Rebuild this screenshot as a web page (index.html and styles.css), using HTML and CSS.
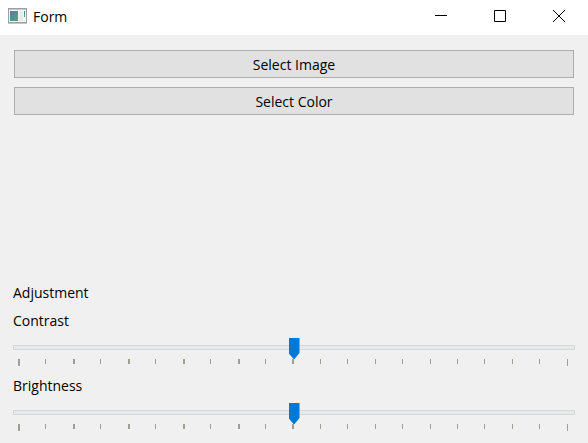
FILE: index.html
```html
<!DOCTYPE html>
<html lang="en">
<head>
<meta charset="utf-8">
<meta name="viewport" content="width=device-width, initial-scale=1">
<title>Form</title>
<link rel="stylesheet" href="styles.css">
</head>
<body>
<header class="titlebar">
  <svg class="app-icon" width="19" height="16" viewBox="0 0 19 16" aria-hidden="true">
    <defs>
      <linearGradient id="pane" x1="0" y1="0" x2="1" y2="1">
        <stop offset="0" stop-color="#4a7fa5"/>
        <stop offset="1" stop-color="#5aa47c"/>
      </linearGradient>
    </defs>
    <rect x="0.5" y="0.5" width="18" height="14" fill="#f4f5f6" stroke="#9a9fa5"/>
    <path d="M0 15.5h19" stroke="#c4c7ca"/>
    <path d="M1 1.5h17" stroke="#c3c8ce"/>
    <rect x="2" y="3" width="8" height="10" fill="url(#pane)"/>
    <rect x="11" y="3" width="4" height="10" fill="#e9ebed"/>
    <rect x="16" y="3" width="1" height="6" fill="url(#pane)"/>
  </svg>
  <h1 class="title">Form</h1>
  <div class="window-controls">
    <button class="window-button" type="button" aria-label="Minimize">
      <svg width="12" height="12" viewBox="0 0 12 12"><path d="M0 5.5h12"/></svg>
    </button>
    <button class="window-button" type="button" aria-label="Maximize">
      <svg width="12" height="12" viewBox="0 0 12 12"><path d="M.5 .5h11v11h-11z"/></svg>
    </button>
    <button class="window-button" type="button" aria-label="Close">
      <svg width="12" height="12" viewBox="0 0 12 12"><path d="M0 0l12 12M12 0L0 12"/></svg>
    </button>
  </div>
</header>
<main class="form">
  <div class="actions">
    <button class="push-button" type="button">Select Image</button>
    <button class="push-button" type="button">Select Color</button>
  </div>
  <section class="adjustments">
    <h2 class="label">Adjustment</h2>
    <div class="field">
      <label class="label" for="contrast">Contrast</label>
      <input class="slider" id="contrast" type="range" min="0" max="20" value="10">
      <div class="ticks" aria-hidden="true"><i></i><i></i><i></i><i></i><i></i><i></i><i></i><i></i><i></i><i></i><i></i><i></i><i></i><i></i><i></i><i></i><i></i><i></i><i></i><i></i><i></i></div>
    </div>
    <div class="field">
      <label class="label" for="brightness">Brightness</label>
      <input class="slider" id="brightness" type="range" min="0" max="20" value="10">
      <div class="ticks" aria-hidden="true"><i></i><i></i><i></i><i></i><i></i><i></i><i></i><i></i><i></i><i></i><i></i><i></i><i></i><i></i><i></i><i></i><i></i><i></i><i></i><i></i><i></i></div>
    </div>
  </section>
</main>
</body>
</html>
```
FILE: styles.css
```css
* {
  box-sizing: border-box;
}

body {
  display: flex;
  flex-direction: column;
  min-height: 100vh;
  margin: 0;
  background: #f0f0f0;
  color: #000;
  font: 14px/22px "Open Sans", "Noto Sans", sans-serif;
}

.titlebar {
  display: flex;
  align-items: center;
  height: 35px;
  padding-left: 8px;
  background: #fff;
}

.app-icon {
  margin: 0 6px 4px 0;
}

.title,
.label {
  margin: 0;
  font-size: 14px;
  font-weight: 400;
  line-height: 22px;
}

.title {
  padding-bottom: 2px;
}

.window-controls {
  display: flex;
  height: 100%;
  margin-left: auto;
}

.window-button {
  display: grid;
  place-items: center;
  width: 59px;
  padding: 0 0 3px;
  border: 0;
  background: none;
}

.window-button svg {
  fill: none;
  stroke: #000;
}

.form {
  display: flex;
  flex: 1;
  flex-direction: column;
  justify-content: space-between;
  padding: 15px 13px 9px;
}

.actions {
  display: grid;
  gap: 9px;
  padding: 0 1px;
}

.push-button {
  height: 28px;
  padding: 2px 0 0;
  border: 1px solid #adadad;
  background: #e1e1e1;
  color: inherit;
  font: inherit;
}

.adjustments {
  display: grid;
  gap: 6px;
}

.field {
  display: grid;
}

.slider {
  width: 100%;
  height: 21px;
  margin: 5px 0 1px;
  appearance: none;
  background: none;
}

.slider::-webkit-slider-runnable-track {
  height: 5px;
  border: 1px solid #d6d6d6;
  background: #e7eaea;
}

.slider::-webkit-slider-thumb {
  width: 11px;
  height: 22px;
  margin-top: -8px;
  appearance: none;
  background: #0078d7;
  clip-path: polygon(0 0, 100% 0, 100% 15px, 6px 21px, 5px 21px, 0 15px);
}

.ticks {
  display: flex;
  justify-content: space-between;
  height: 10px;
  padding: 0 7px 0 5px;
}

.ticks i {
  width: 1px;
  height: 5px;
  background: #a0a090;
}

.ticks i:nth-child(odd):nth-child(-n + 11) {
  width: 2px;
  margin-right: -1px;
}

.ticks i:first-child,
.ticks i:last-child {
  height: 7px;
}
```
